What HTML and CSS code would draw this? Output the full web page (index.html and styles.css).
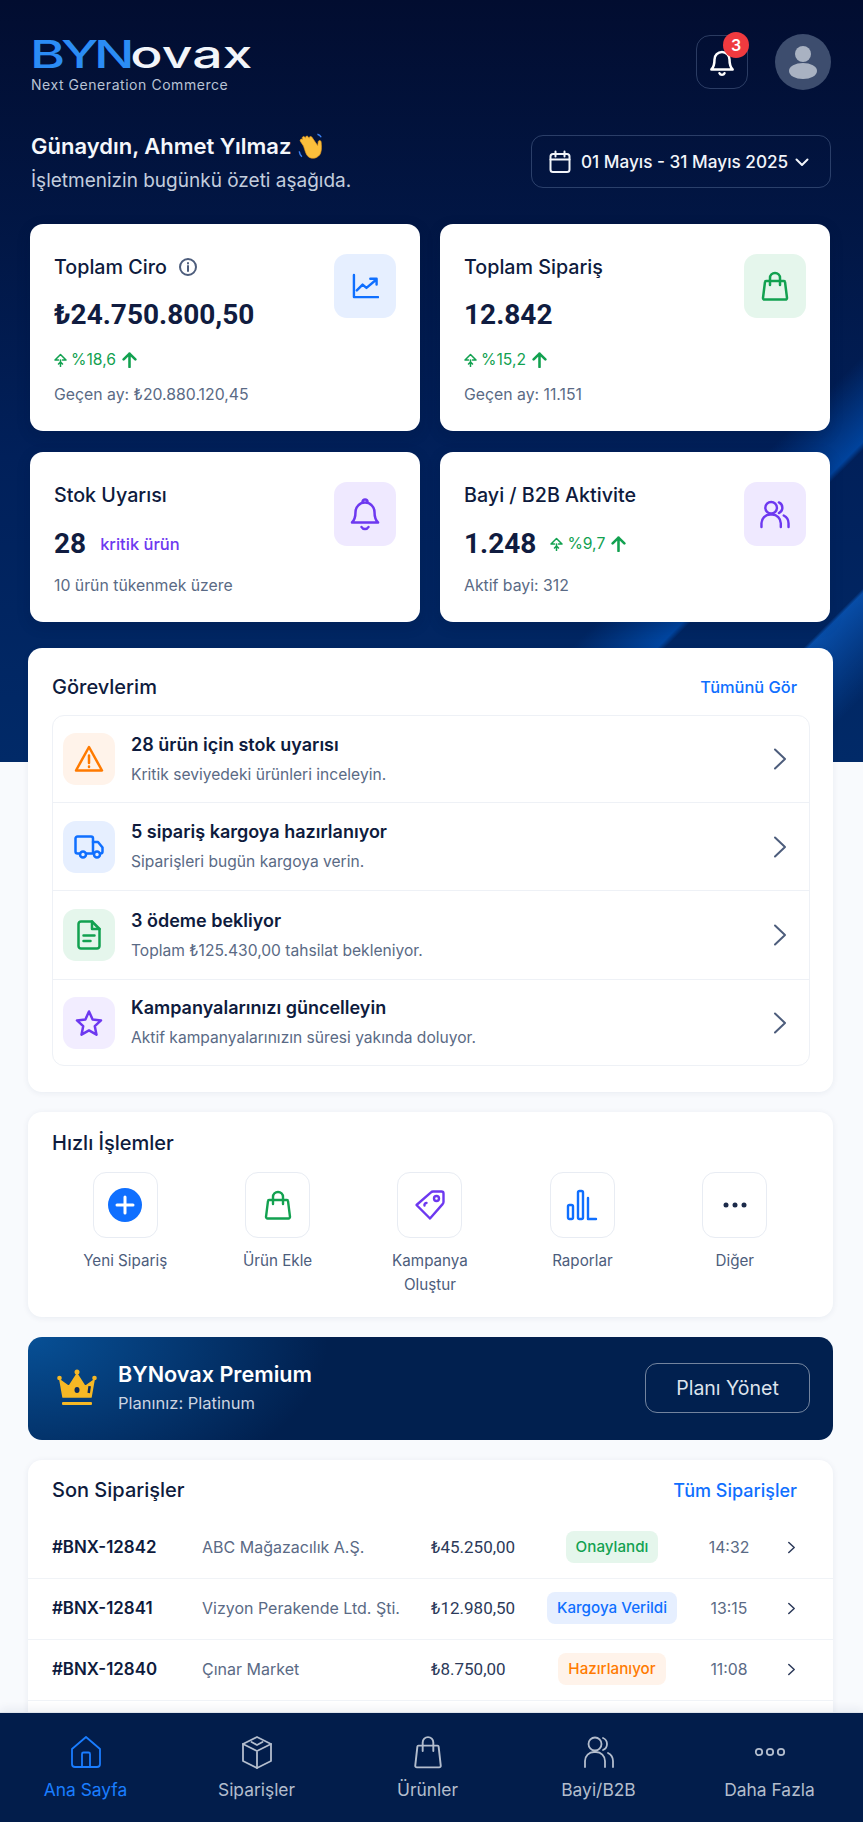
FILE: index.html
```html
<!DOCTYPE html>
<html lang="tr">
<head>
  <meta charset="UTF-8">
  <title>BYNovax</title>
  <link rel="stylesheet" href="styles.css">
</head>
<body>
<div class="page">

  <section class="hero">
    <div class="topbar">
      <div class="logo">
        <div class="logo-name"><span class="logo-blue">BYN</span>ovax</div>
        <div class="logo-tag">Next Generation Commerce</div>
      </div>
      <div class="top-actions">
        <div class="bell-btn">
          <svg class="ic" width="30" height="30" viewBox="0 0 24 24"><path d="M6 10a6 6 0 0 1 12 0c0 5 1 6.500 2.500 8H3.500C5 16.500 6 15 6 10z"/><path d="M10 21a2.200 2.200 0 0 0 4 0"/></svg>
          <span class="bell-count">3</span>
        </div>
        <div class="avatar">
          <svg width="32" height="34" viewBox="0 0 32 34"><circle cx="16" cy="9" r="8" fill="#a9b2c2"/><ellipse cx="16" cy="26" rx="14" ry="8" fill="#a9b2c2"/></svg>
        </div>
      </div>
    </div>

    <div class="greet-row">
      <div>
        <div class="greet">Günaydın, Ahmet Yılmaz
          <svg class="wave" width="30" height="30" viewBox="0 0 28 28"><path d="M7 14 4 9.500c-.8-1.400 1-2.700 2.100-1.500L6 7c-.7-1.500 1.200-2.600 2.200-1.300l.8 1C8.500 5 10.400 4 11.300 5.300l1 1.400c-.2-1.500 1.600-2.200 2.500-1l5.500 8 .4-3.500c.3-1.700 2.700-1.700 2.800.3.200 3 .7 6.500-.5 10-1.600 4.500-7.500 6.500-11.500 3.500C9 22 8.500 18 7 14z" fill="#fbbf3c" stroke="#e89a1c" stroke-width=".6"/><path d="M3 19c.3 2 1 3.500 2.500 5" stroke="#3b82f6" stroke-width="1.300" fill="none"/><path d="M20 3c1.500.3 2.800 1.300 3.500 2.800" stroke="#3b82f6" stroke-width="1.300" fill="none"/></svg>
        </div>
        <div class="greet-sub">İşletmenizin bugünkü özeti aşağıda.</div>
      </div>
      <div class="date-btn">
        <svg class="ic" width="24" height="24" viewBox="0 0 24 24"><rect x="2.500" y="4" width="19" height="18" rx="2.500"/><path d="M2.500 9.500h19M7.500 1.500v5M16.500 1.500v5"/></svg>
        <span>01 Mayıs - 31 Mayıs 2025</span>
        <svg class="ic date-chev" width="16" height="16" viewBox="0 0 16 16"><path d="M2.500 5.500 8 11l5.500-5.500"/></svg>
      </div>
    </div>

    <div class="stats">
      <div class="card">
        <div>
          <div class="card-title">Toplam Ciro
            <svg class="ic info" width="18" height="18" viewBox="0 0 18 18"><circle cx="9" cy="9" r="8"/><path d="M9 8v5M9 5v.6"/></svg>
          </div>
          <div class="card-value">₺24.750.800,50</div>
          <div class="delta">
            <svg class="ic trend" width="13" height="14" viewBox="0 0 13 14"><path d="M1 7 6.500 1.500 12 7H8.500M4.500 7H1M6.500 7v6.500M4.500 11l2-2 2 2"/></svg>
            %18,6
            <svg class="ic up" width="15" height="16" viewBox="0 0 14 15"><path d="M7 14V1.500M1.500 7 7 1.500 12.500 7"/></svg>
          </div>
          <div class="note">Geçen ay: ₺20.880.120,45</div>
        </div>
        <div class="icon-box tint-blue">
          <svg class="ic" width="27" height="27" viewBox="0 0 28 28"><path d="M2 2v23h25M5 18l6-6 4 3.500L25 7M19 6h6.500v6"/></svg>
        </div>
      </div>

      <div class="card">
        <div>
          <div class="card-title">Toplam Sipariş</div>
          <div class="card-value">12.842</div>
          <div class="delta">
            <svg class="ic trend" width="13" height="14" viewBox="0 0 13 14"><path d="M1 7 6.500 1.500 12 7H8.500M4.500 7H1M6.500 7v6.500M4.500 11l2-2 2 2"/></svg>
            %15,2
            <svg class="ic up" width="15" height="16" viewBox="0 0 14 15"><path d="M7 14V1.500M1.500 7 7 1.500 12.500 7"/></svg>
          </div>
          <div class="note">Geçen ay: 11.151</div>
        </div>
        <div class="icon-box tint-green">
          <svg class="ic" width="28" height="30" viewBox="0 0 28 30"><path d="M5 10h18a1 1 0 0 1 1 .900l2 16a1.500 1.500 0 0 1-1.500 1.600H3.500A1.500 1.500 0 0 1 2 26.900l2-16A1 1 0 0 1 5 10z"/><path d="M9 14V7a5 5 0 0 1 10 0v7"/></svg>
        </div>
      </div>

      <div class="card card-compact">
        <div>
          <div class="card-title">Stok Uyarısı</div>
          <div class="value-row">
            <div class="card-value">28</div>
            <span class="critical">kritik ürün</span>
          </div>
          <div class="note">10 ürün tükenmek üzere</div>
        </div>
        <div class="icon-box tint-purple">
          <svg class="ic" width="30" height="36" viewBox="0 0 30 36"><path d="M5.500 16a9.500 9.500 0 0 1 19 0c0 5 1 8 3.500 10.500H2C4.500 24 5.500 21 5.500 16z"/><path d="M12.500 6a2.500 2.500 0 0 1 5 0M11.500 31a4 4 0 0 0 7 0"/></svg>
        </div>
      </div>

      <div class="card card-compact">
        <div>
          <div class="card-title">Bayi / B2B Aktivite</div>
          <div class="value-row">
            <div class="card-value">1.248</div>
            <div class="delta">
              <svg class="ic trend" width="13" height="14" viewBox="0 0 13 14"><path d="M1 7 6.500 1.500 12 7H8.500M4.500 7H1M6.500 7v6.500M4.500 11l2-2 2 2"/></svg>
              %9,7
              <svg class="ic up" width="15" height="16" viewBox="0 0 14 15"><path d="M7 14V1.500M1.500 7 7 1.500 12.500 7"/></svg>
            </div>
          </div>
          <div class="note">Aktif bayi: 312</div>
        </div>
        <div class="icon-box tint-purple">
          <svg class="ic" width="32" height="29" viewBox="0 0 32 30"><circle cx="12" cy="8" r="6"/><path d="M2 28v-4a9 9 0 0 1 9-9h2a9 9 0 0 1 9 9v4"/><path d="M20 2.500a6 6 0 0 1 0 11"/><path d="M30 28v-4a9 9 0 0 0-5-8"/></svg>
        </div>
      </div>
    </div>
  </section>

  <main class="content">
    <section class="panel tasks">
      <div class="panel-head">
        <h2>Görevlerim</h2>
        <a class="link link-small">Tümünü Gör</a>
      </div>
      <div class="task-list">
        <div class="task">
          <div class="task-icon tint-orange">
            <svg class="ic" width="30" height="28" viewBox="0 0 30 28"><path d="M15 2 28 25.500H2z"/><path d="M15 10.500v7.500M15 21.500v.5"/></svg>
          </div>
          <div>
            <div class="task-title">28 ürün için stok uyarısı</div>
            <div class="task-sub">Kritik seviyedeki ürünleri inceleyin.</div>
          </div>
          <svg class="ic chev" width="16" height="24" viewBox="0 0 16 24"><path d="M3 2.500 13 12 3 21.500"/></svg>
        </div>
        <div class="task">
          <div class="task-icon tint-blue">
            <svg class="ic" width="30" height="24" viewBox="0 0 30 24"><path d="M6 18.500H3.500A2 2 0 0 1 1.500 16.500V3.500a2 2 0 0 1 2-2H17a2 2 0 0 1 2 2v15h-7"/><path d="M19 7h5l4.500 5.500v4a2 2 0 0 1-2 2H26"/><circle cx="9" cy="19.500" r="3"/><circle cx="23" cy="19.500" r="3"/></svg>
          </div>
          <div>
            <div class="task-title">5 sipariş kargoya hazırlanıyor</div>
            <div class="task-sub">Siparişleri bugün kargoya verin.</div>
          </div>
          <svg class="ic chev" width="16" height="24" viewBox="0 0 16 24"><path d="M3 2.500 13 12 3 21.500"/></svg>
        </div>
        <div class="task">
          <div class="task-icon tint-green">
            <svg class="ic" width="24" height="30" viewBox="0 0 24 30"><path d="M4 1.500h11l7.500 7.500v17a2.500 2.500 0 0 1-2.500 2.500H4A2.500 2.500 0 0 1 1.500 26V4A2.500 2.500 0 0 1 4 1.500z"/><path d="M15 1.500V9h7.500M6.500 15.500h11M6.500 21h7"/></svg>
          </div>
          <div>
            <div class="task-title">3 ödeme bekliyor</div>
            <div class="task-sub">Toplam ₺125.430,00 tahsilat bekleniyor.</div>
          </div>
          <svg class="ic chev" width="16" height="24" viewBox="0 0 16 24"><path d="M3 2.500 13 12 3 21.500"/></svg>
        </div>
        <div class="task">
          <div class="task-icon tint-violet">
            <svg class="ic" width="28" height="28" viewBox="0 0 28 28"><path d="M14 2.500 17.600 10.400 26 11.400 19.800 17.200 21.500 25.700 14 21.400 6.500 25.700 8.200 17.200 2 11.400 10.400 10.400z"/></svg>
          </div>
          <div>
            <div class="task-title">Kampanyalarınızı güncelleyin</div>
            <div class="task-sub">Aktif kampanyalarınızın süresi yakında doluyor.</div>
          </div>
          <svg class="ic chev" width="16" height="24" viewBox="0 0 16 24"><path d="M3 2.500 13 12 3 21.500"/></svg>
        </div>
      </div>
    </section>

    <section class="panel quick">
      <h2>Hızlı İşlemler</h2>
      <div class="quick-grid">
        <div class="quick-item">
          <div class="quick-box">
            <svg width="34" height="34" viewBox="0 0 34 34"><circle cx="17" cy="17" r="17" fill="#0f6fff"/><path d="M17 9v16M9 17h16" stroke="#fff" stroke-width="3" stroke-linecap="round"/></svg>
          </div>
          <div class="quick-label">Yeni Sipariş</div>
        </div>
        <div class="quick-item">
          <div class="quick-box c-green">
            <svg class="ic" width="28" height="30" viewBox="0 0 28 30"><path d="M5 10h18a1 1 0 0 1 1 .900l2 16a1.500 1.500 0 0 1-1.500 1.600H3.500A1.500 1.500 0 0 1 2 26.900l2-16A1 1 0 0 1 5 10z"/><path d="M9 14V7a5 5 0 0 1 10 0v7"/></svg>
          </div>
          <div class="quick-label">Ürün Ekle</div>
        </div>
        <div class="quick-item">
          <div class="quick-box c-purple">
            <svg class="ic" width="32" height="32" viewBox="0 0 32 32"><path d="M19 2.500h8.500a2 2 0 0 1 2 2V13a3 3 0 0 1-.9 2.100L16 29.500 2.500 16 17 3.400A3 3 0 0 1 19 2.500z"/><circle cx="22.500" cy="9.500" r="2.500"/><path d="M10.500 16.500a2 2 0 0 1 2-2.500"/></svg>
          </div>
          <div class="quick-label">Kampanya Oluştur</div>
        </div>
        <div class="quick-item">
          <div class="quick-box c-blue">
            <svg class="ic" width="32" height="32" viewBox="0 0 32 32"><rect x="2" y="16" width="5" height="14" rx="1.500"/><rect x="12" y="2" width="5" height="28" rx="1.500"/><path d="M22 9v21h8"/></svg>
          </div>
          <div class="quick-label">Raporlar</div>
        </div>
        <div class="quick-item">
          <div class="quick-box">
            <svg width="24" height="6" viewBox="0 0 24 6"><circle cx="3" cy="3" r="2.500" fill="#1c2a4a"/><circle cx="12" cy="3" r="2.500" fill="#1c2a4a"/><circle cx="21" cy="3" r="2.500" fill="#1c2a4a"/></svg>
          </div>
          <div class="quick-label">Diğer</div>
        </div>
      </div>
    </section>

    <section class="premium">
      <svg width="40" height="38" viewBox="0 0 40 38"><path d="M6 28 3 11l9 6.500L20 5l8 12.500L37 11l-3 17z" fill="#f6b825" stroke="#f6b825" stroke-width="1.500" stroke-linejoin="round"/><circle cx="2.500" cy="9" r="2.300" fill="#f6b825"/><circle cx="37.500" cy="9" r="2.300" fill="#f6b825"/><circle cx="20" cy="3" r="2.500" fill="#f6b825"/><ellipse cx="20" cy="21" rx="2.500" ry="3" fill="#0b2a5c"/><rect x="31" y="17" width="2.500" height="7" fill="#0b2a5c" transform="rotate(8 32 20)"/><rect x="5" y="33" width="30" height="3" rx="1" fill="#f6b825"/></svg>
      <div class="premium-text">
        <div class="premium-title">BYNovax Premium</div>
        <div class="premium-sub">Planınız: Platinum</div>
      </div>
      <div class="plan-btn">Planı Yönet</div>
    </section>

    <section class="panel orders">
      <div class="panel-head">
        <h2>Son Siparişler</h2>
        <a class="link">Tüm Siparişler</a>
      </div>
      <div class="order">
        <span class="order-id">#BNX-12842</span>
        <span class="order-name">ABC Mağazacılık A.Ş.</span>
        <span class="order-sum">₺45.250,00</span>
        <span class="badge-wrap"><span class="badge tint-green">Onaylandı</span></span>
        <span class="order-time">14:32</span>
        <svg class="ic order-chev" width="9" height="13" viewBox="0 0 10 14"><path d="M2 1.500 8 7l-6 5.500"/></svg>
      </div>
      <div class="order">
        <span class="order-id">#BNX-12841</span>
        <span class="order-name">Vizyon Perakende Ltd. Şti.</span>
        <span class="order-sum">₺12.980,50</span>
        <span class="badge-wrap"><span class="badge tint-blue">Kargoya Verildi</span></span>
        <span class="order-time">13:15</span>
        <svg class="ic order-chev" width="9" height="13" viewBox="0 0 10 14"><path d="M2 1.500 8 7l-6 5.500"/></svg>
      </div>
      <div class="order">
        <span class="order-id">#BNX-12840</span>
        <span class="order-name">Çınar Market</span>
        <span class="order-sum">₺8.750,00</span>
        <span class="badge-wrap"><span class="badge tint-orange">Hazırlanıyor</span></span>
        <span class="order-time">11:08</span>
        <svg class="ic order-chev" width="9" height="13" viewBox="0 0 10 14"><path d="M2 1.500 8 7l-6 5.500"/></svg>
      </div>
    </section>
  </main>

  <nav class="tabbar">
    <a class="tab active">
      <svg class="ic" width="34" height="34" viewBox="0 0 34 34"><path d="M3 14 17 2l14 12v15a3 3 0 0 1-3 3H6a3 3 0 0 1-3-3z"/><path d="M13 32V19a1.500 1.500 0 0 1 1.500-1.500h5A1.500 1.500 0 0 1 21 19v13"/></svg>
      Ana Sayfa
    </a>
    <a class="tab">
      <svg class="ic" width="34" height="34" viewBox="0 0 34 34"><path d="M17 2 31 9v17l-14 7-14-7V9z"/><path d="M3 9l14 7 14-7M17 16v17"/><path d="M11.500 7 17 10l5.500-3"/></svg>
      Siparişler
    </a>
    <a class="tab">
      <svg class="ic" width="30" height="34" viewBox="0 0 28 32"><path d="M5 10h18a1 1 0 0 1 1 .900l2 18a1.500 1.500 0 0 1-1.500 1.600H3.500A1.500 1.500 0 0 1 2 28.900l2-18A1 1 0 0 1 5 10z"/><path d="M9 15V7a5 5 0 0 1 10 0v8"/></svg>
      Ürünler
    </a>
    <a class="tab">
      <svg class="ic" width="32" height="34" viewBox="0 0 32 32"><circle cx="12" cy="8" r="6.500"/><path d="M2 31v-6a9 9 0 0 1 9-9h2a9 9 0 0 1 9 9v6"/><path d="M20 2a6.500 6.500 0 0 1 0 12"/><path d="M30 31v-6a9 9 0 0 0-5-8"/></svg>
      Bayi/B2B
    </a>
    <a class="tab">
      <svg class="ic" width="32" height="34" viewBox="0 0 32 34"><circle cx="5" cy="17" r="3.200"/><circle cx="16" cy="17" r="3.200"/><circle cx="27" cy="17" r="3.200"/></svg>
      Daha Fazla
    </a>
  </nav>

</div>
</body>
</html>
```

FILE: styles.css
```css
* {
  box-sizing: border-box;
}

body {
  margin: 0;
  font-family: "Inter", "Liberation Sans", sans-serif;
  background: #f8fafd;
  color: #0e1b3d;
}

.page {
  position: relative;
  height: 100vh;
  overflow: hidden;
}

.ic {
  fill: none;
  stroke: currentColor;
  stroke-width: 2;
  stroke-linecap: round;
  stroke-linejoin: round;
  flex: none;
}

h2 {
  margin: 0;
  font-size: 20px;
  line-height: 26px;
  font-weight: 500;
}

/* hero */
.hero {
  height: 762px;
  padding: 34px 32px 0 30px;
  background:
    linear-gradient(135deg, transparent 89.3%, rgba(10, 90, 190, 0.75) 89.6%, transparent 96%),
    linear-gradient(135deg, transparent 75%, rgba(0, 90, 200, 0.6) 80.3%, transparent 80.8%),
    linear-gradient(180deg, #020d30 0%, #01205a 60%, #012a68 100%);
}

.topbar {
  display: flex;
  justify-content: space-between;
}

.logo-name {
  font-size: 38px;
  line-height: 38px;
  font-weight: 500;
  color: #f2f5fa;
  transform: scaleX(1.41);
  transform-origin: left center;
  margin-top: 1px;
}

.logo-blue {
  color: #2b8cf5;
  letter-spacing: -3px;
}

.logo-tag {
  margin: 3px 0 0 1px;
  font-size: 14px;
  line-height: 18px;
  letter-spacing: 0.550px;
  color: #b9c3d4;
}

.top-actions {
  display: flex;
  align-items: flex-start;
  gap: 27px;
}

.bell-btn {
  position: relative;
  display: flex;
  align-items: center;
  justify-content: center;
  width: 52px;
  height: 54px;
  margin-top: 1px;
  border: 1px solid rgba(150, 175, 215, 0.28);
  border-radius: 14px;
  color: #fff;
}

.bell-count {
  position: absolute;
  top: -4px;
  right: -2px;
  width: 26px;
  height: 26px;
  border-radius: 50%;
  background: #ef3a3f;
  font-size: 16px;
  line-height: 26px;
  font-weight: 600;
  text-align: center;
}

.avatar {
  display: flex;
  align-items: center;
  justify-content: center;
  width: 56px;
  height: 56px;
  border-radius: 50%;
  background: #3d4d6e;
}

.greet-row {
  display: flex;
  justify-content: space-between;
  align-items: flex-start;
  margin-top: 39px;
}

.greet {
  display: flex;
  align-items: center;
  gap: 5px;
  margin-left: 1px;
  font-size: 22px;
  line-height: 26px;
  font-weight: 600;
  color: #f5f7fb;
}

.wave {
  margin: -2px 0;
}

.greet-sub {
  margin: 9px 0 0 1px;
  font-size: 19px;
  line-height: 26px;
  color: #c3cddd;
}

.date-btn {
  display: flex;
  align-items: center;
  gap: 9px;
  width: 300px;
  height: 53px;
  margin-top: 2px;
  padding: 0 16px;
  border: 1px solid rgba(150, 175, 215, 0.28);
  border-radius: 12px;
  font-size: 17.200px;
  font-weight: 500;
  color: #f2f5fa;
  white-space: nowrap;
}

.date-chev {
  margin-left: -3px;
}

.stats {
  display: grid;
  grid-template-columns: 390px 390px;
  gap: 21px 20px;
  margin-top: 30px;
}

.card {
  display: flex;
  justify-content: space-between;
  padding: 30px 24px 25px;
  background: #fff;
  border-radius: 13px;
  box-shadow: 0 4px 14px rgba(0, 15, 50, 0.18);
}

.card-title {
  display: flex;
  align-items: center;
  gap: 12px;
  font-size: 19.700px;
  line-height: 26px;
  font-weight: 500;
}

.info {
  color: #4d5d7c;
}

.card-value {
  margin-top: 17px;
  font-family: "Roboto", "Inter", sans-serif;
  font-size: 28px;
  line-height: 36px;
  font-weight: 700;
  color: #101c40;
}

.delta {
  display: flex;
  align-items: center;
  gap: 3px;
  margin-top: 15px;
  font-size: 15.700px;
  line-height: 24px;
  color: #12a150;
}

.delta .trend {
  stroke-width: 1.500;
  margin-right: 1px;
}

.delta .up {
  margin-left: 3px;
  stroke-width: 2.400;
}

.note {
  margin-top: 12px;
  font-size: 15.800px;
  line-height: 22px;
  color: #5a6a85;
}

.value-row {
  display: flex;
  align-items: center;
  gap: 14px;
  margin-top: 18px;
}

.value-row .card-value,
.value-row .delta {
  margin-top: 0;
}

.card-compact .note {
  margin-top: 13px;
}

.critical {
  font-size: 16.500px;
  font-weight: 500;
  color: #6d38f0;
}

.icon-box {
  display: flex;
  align-items: center;
  justify-content: center;
  width: 62px;
  height: 64px;
  border-radius: 13px;
}

.icon-box .ic,
.task-icon .ic {
  stroke-width: 2.500;
}

.tint-blue {
  background: #e6efff;
  color: #0f6fff;
}

.tint-green {
  background: #e5f6ec;
  color: #12a150;
}

.tint-purple {
  background: #efe9ff;
  color: #6d38f0;
}

.tint-violet {
  background: #f2edff;
  color: #6d38f0;
}

.tint-orange {
  background: #fff3ea;
  color: #ff7a00;
}

/* panels */
.content {
  margin-top: -114px;
  padding: 0 30px 0 28px;
  display: flex;
  flex-direction: column;
  gap: 20px;
}

.panel {
  background: #fff;
  border-radius: 14px;
  box-shadow: 0 1px 6px rgba(20, 40, 80, 0.07);
  padding: 0 23px 0 24px;
}

.panel-head {
  display: flex;
  justify-content: space-between;
  align-items: center;
}

.link {
  font-size: 18px;
  font-weight: 500;
  color: #0f6fff;
  padding-right: 13px;
}

.link-small {
  font-size: 16.400px;
}

.tasks {
  position: relative;
  padding-top: 26px;
  padding-bottom: 26px;
}

.task-list {
  display: grid;
  grid-template-rows: 87px 88px 89px 1fr;
  height: 351px;
  margin-top: 15px;
  border: 1px solid #eef1f6;
  border-radius: 12px;
}

.task {
  display: flex;
  align-items: center;
  gap: 16px;
  padding: 0 21px 0 10px;
  border-bottom: 1px solid #eef1f6;
}

.task:last-child {
  border-bottom: 0;
}

.task-icon {
  display: flex;
  align-items: center;
  justify-content: center;
  flex: none;
  width: 52px;
  height: 52px;
  border-radius: 13px;
}

.task-title {
  font-size: 18px;
  line-height: 24px;
  font-weight: 600;
}

.task-sub {
  margin-top: 7px;
  font-size: 15.600px;
  line-height: 22px;
  color: #5a6a85;
}

.chev {
  margin-left: auto;
  color: #4d5d7c;
}

.quick {
  padding-top: 18px;
  padding-bottom: 20px;
}

.quick-grid {
  display: grid;
  grid-template-columns: repeat(5, 1fr);
  margin: 16px -1px 0 -3px;
}

.quick-item {
  display: flex;
  flex-direction: column;
  align-items: center;
}

.quick-box {
  display: flex;
  align-items: center;
  justify-content: center;
  width: 65px;
  height: 66px;
  border: 1px solid #e8ecf3;
  border-radius: 13px;
}

.quick-box .ic {
  stroke-width: 2.400;
}

.c-green {
  color: #12a150;
}

.c-purple {
  color: #6d38f0;
}

.c-blue {
  color: #0f6fff;
}

.quick-label {
  max-width: 100px;
  margin-top: 11px;
  font-size: 15.200px;
  line-height: 24px;
  text-align: center;
  color: #4d5d7c;
}

/* premium */
.premium {
  display: flex;
  align-items: center;
  height: 103px;
  padding: 0 23px 2px 29px;
  border-radius: 14px;
  background:
    radial-gradient(ellipse 300px 170px at 0 0, #075096 0, rgba(7, 80, 150, 0) 100%),
    #01204f;
  color: #fff;
}

.premium-text {
  margin-left: 21px;
  padding-bottom: 1px;
}

.premium-title {
  font-size: 21.600px;
  line-height: 28px;
  font-weight: 600;
}

.premium-sub {
  margin-top: 4px;
  font-size: 16.500px;
  line-height: 22px;
  color: #ccd4e2;
}

.plan-btn {
  margin-left: auto;
  width: 165px;
  height: 50px;
  border: 1px solid rgba(255, 255, 255, 0.45);
  border-radius: 12px;
  font-size: 19.500px;
  line-height: 48px;
  text-align: center;
  color: #dde3ec;
}

/* orders */
.orders {
  height: 400px;
  padding: 17px 0 0;
}

.orders .panel-head {
  margin-bottom: 15px;
  padding: 0 23px 0 24px;
}

.order {
  display: grid;
  grid-template-columns: 150px 229px 100px 162px 72px 1fr;
  align-items: center;
  height: 61px;
  padding: 0 0 2px 24px;
  border-bottom: 1px solid #f0f3f7;
  font-size: 16px;
}

.order-id {
  font-size: 16.900px;
  font-weight: 600;
  color: #0e1b3d;
}

.order-name {
  color: #5a6a85;
}

.order-sum {
  font-family: "Roboto", "Inter", sans-serif;
  font-size: 17px;
  color: #2c3a5a;
}

.badge-wrap {
  text-align: center;
}

.badge {
  display: inline-block;
  height: 32px;
  padding: 0 10px;
  border-radius: 8px;
  font-size: 15.200px;
  line-height: 32px;
  font-weight: 500;
}

.order-time {
  text-align: center;
  font-size: 15.800px;
  color: #5a6a85;
}

.order-chev {
  justify-self: center;
  color: #2c3a5a;
  margin-right: 15px;
  stroke-width: 1.700;
}

/* bottom bar */
.tabbar {
  position: absolute;
  left: 0;
  right: 0;
  bottom: 0;
  display: grid;
  grid-template-columns: repeat(5, 1fr);
  height: 110px;
  padding-right: 8px;
  background: #021d4b;
  border-top: 1px solid #dfe4ec;
  box-shadow: 0 -4px 8px rgba(20, 40, 80, 0.06);
}

.tab {
  display: flex;
  flex-direction: column;
  align-items: center;
  padding-top: 22px;
  gap: 9px;
  font-size: 17.400px;
  line-height: 24px;
  color: #b3bdcd;
}

.tab .ic {
  stroke-width: 1.800;
}

.tab.active {
  color: #1a7dff;
}
```
